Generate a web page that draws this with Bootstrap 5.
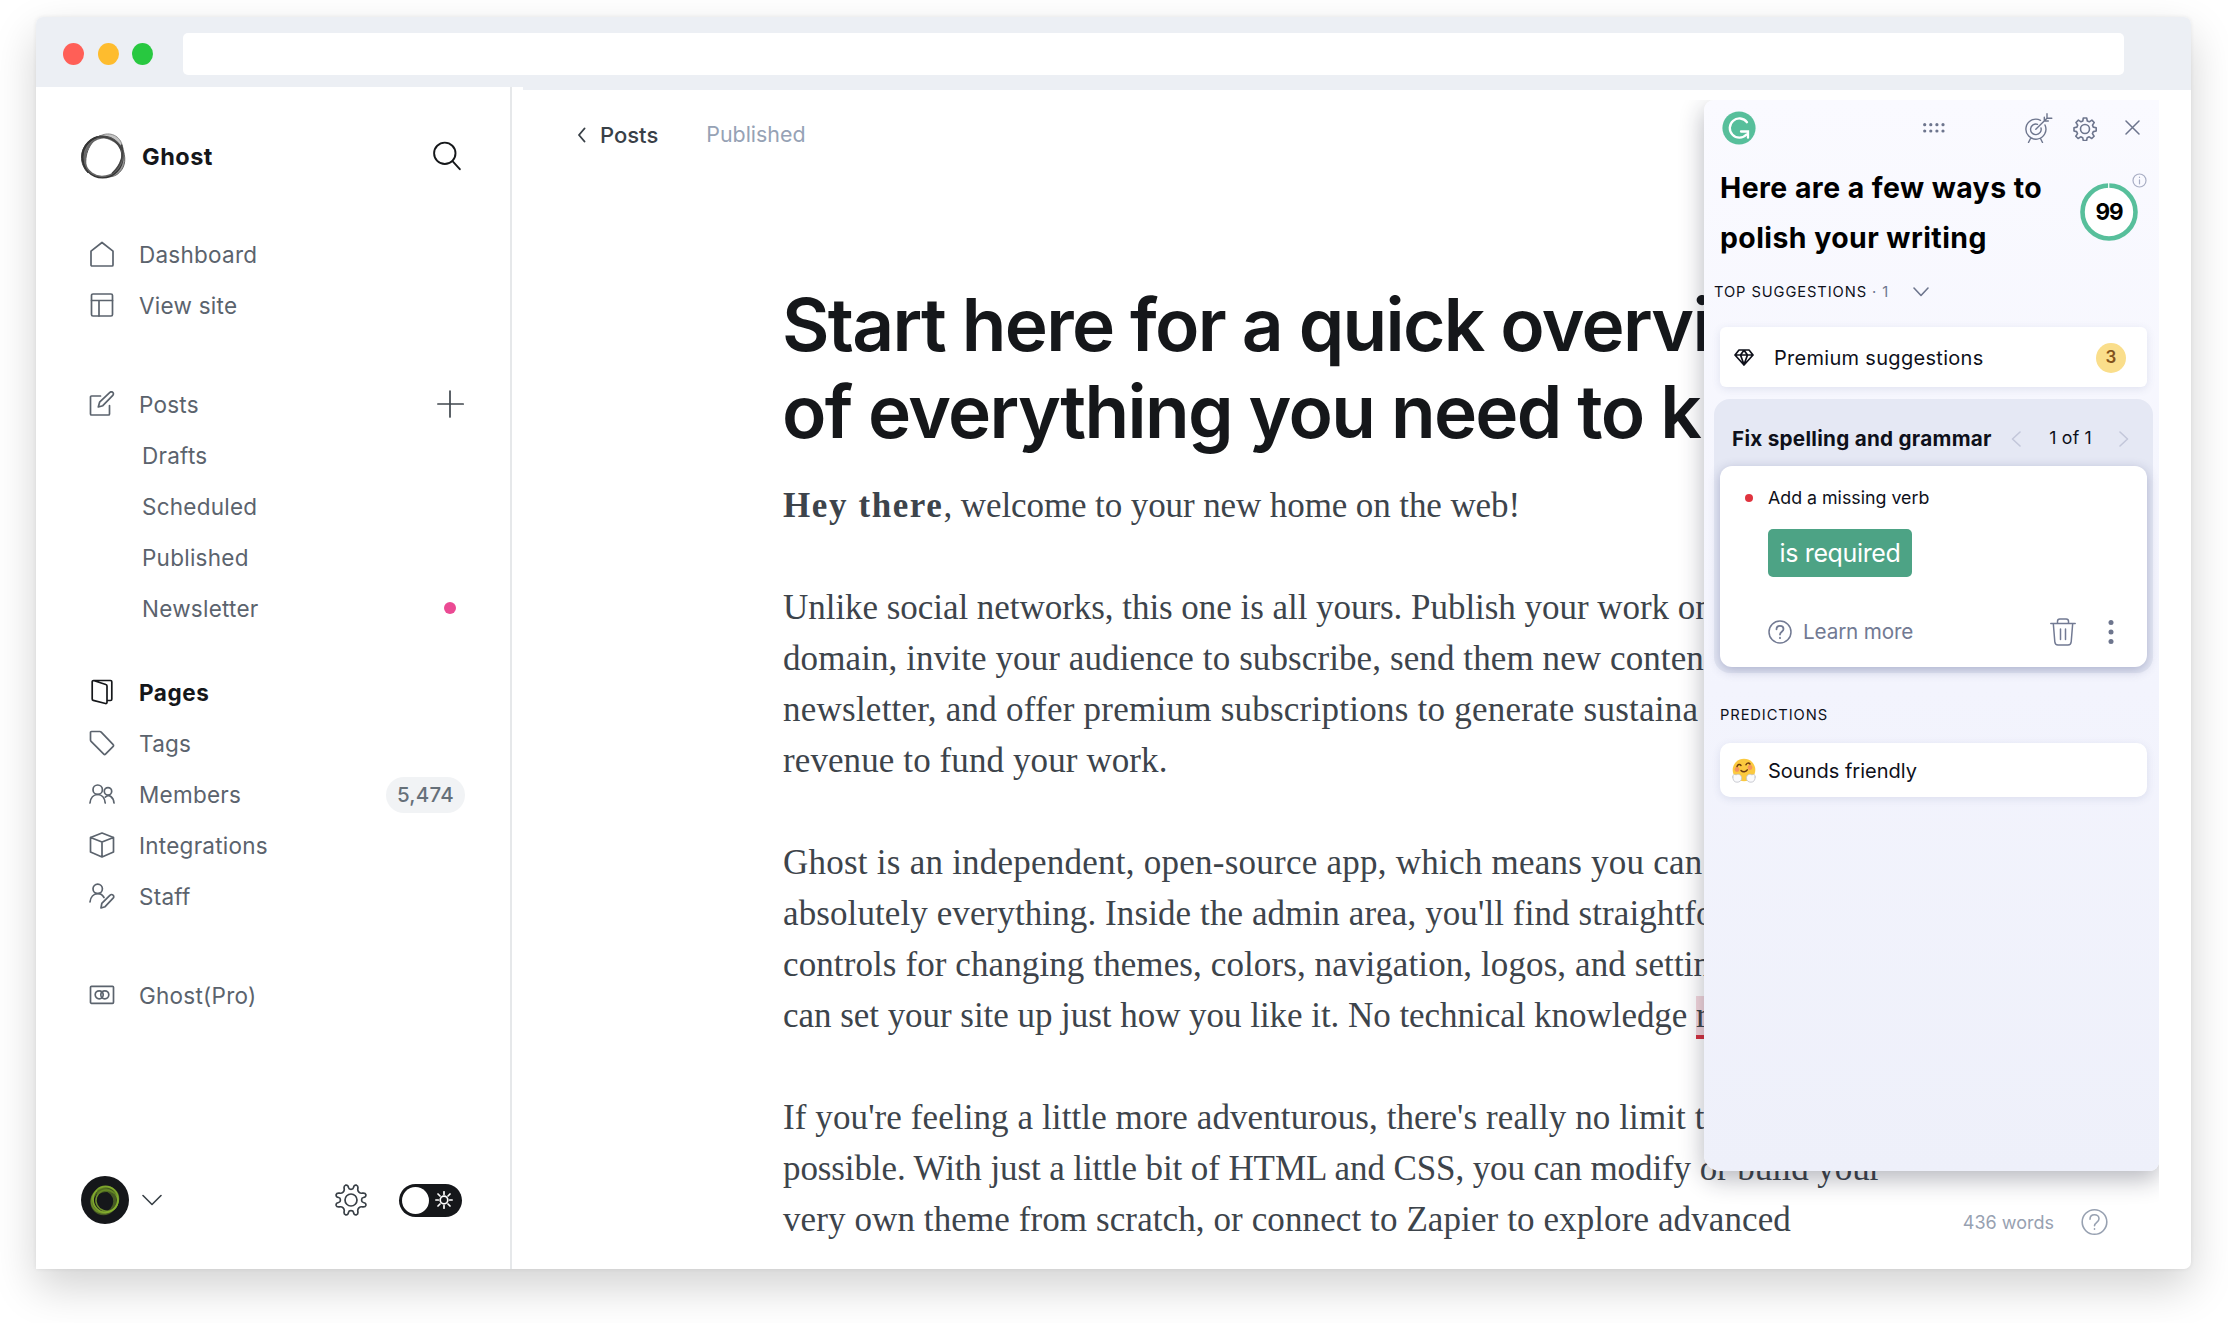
<!DOCTYPE html>
<html lang="en">
<head>
  <meta charset="UTF-8">
  <meta name="viewport" content="width=device-width, initial-scale=1">
  <title>Ghost</title>
  <link href="https://cdn.jsdelivr.net/npm/bootstrap@5.3.3/dist/css/bootstrap.min.css" rel="stylesheet">

  <style>
    body {
      font-family: Inter, "Liberation Sans", sans-serif;
      color: #15171a;
      background: #fff;
      padding: 17px 0 0 36px;
    }
    svg { display: block; flex: none; stroke-linecap: round; stroke-linejoin: round; }
    svg:not([fill]) { fill: none; }
    svg:not([stroke]) { stroke: currentColor; }
    a { color: inherit; text-decoration: none; }
    .window {
      width: 2155px;
      height: 1252px;
      background: #fff;
      border-radius: 7px 7px 7px 0;
      box-shadow: 0 18px 44px rgba(0, 0, 0, .18), 0 0 4px rgba(0, 0, 0, .07);
    }

    /* Browser bar */
    .browser-bar {
      height: 70px;
      padding: 3px 67px 0 27px;
      background: #eceff4;
      border-radius: 7px 7px 0 0;
    }
    .light { width: 21px; height: 22px; border-radius: 50%; margin-right: 13.5px; }
    .light-red { background: #ff5f57; }
    .light-yellow { background: #febc2e; }
    .light-green { background: #28c840; }
    .address { height: 42px; margin: 1px 0 0 16px; background: #fff; border-radius: 5px; }

    /* Sidebar */
    .sidebar { width: 476px; height: 1182px; border-right: 2px solid #e6e8ea; padding: 45px 45px 0 44px; }
    .site-row { height: 48px; margin-bottom: 49px; }
    .site-name { font-size: 23.5px; font-weight: 700; margin-left: 16px; padding-top: 1px; letter-spacing: .5px; }
    .side-list { margin-bottom: 48px; }
    .side-list.short-gap { margin-bottom: 33px; }
    .side-list a {
      display: flex;
      align-items: center;
      height: 51px;
      padding-left: 9px;
      font-size: 22.5px;
      color: #5b636d;
      letter-spacing: .25px;
    }
    .side-list a svg { margin-right: 24px; margin-top: -1px; }
    .side-list svg:not([stroke-width]) { stroke-width: 1.7; }
    .side-list a.sub { padding-left: 62px; }
    .side-list a.current { color: #15171a; font-weight: 700; letter-spacing: .55px; }
    .side-list .end { margin-left: auto; margin-right: 0; }
    .side-list .news-dot { width: 12px; height: 12px; border-radius: 50%; background: #eb4a93; margin: -2px 9px 0 auto; }
    .count { height: 36px; line-height: 36px; padding: 0 11px; border-radius: 18px; background: #f1f3f5; color: #667079; font-size: 20.5px; font-weight: 500; }
    .side-foot { margin-top: 154px; height: 50px; }
    .avatar { width: 48px; height: 48px; margin: 0 13px 0 1px; }
    .toggle { width: 63px; height: 33px; border-radius: 17px; background: #15171a; color: #fff; padding: 3px 9px 3px 3px; margin: 0 3px 0 32px; }
    .toggle i { width: 27px; height: 27px; border-radius: 50%; background: #fff; }

    /* Editor */
    .editor { margin-left: 11px; border-top: 3px solid #eceff4; height: 1182px; overflow: hidden; }
    .editor-top { padding: 28px 0 0 51px; height: 62px; font-size: 22px; }
    .editor-top .back { color: #394047; font-weight: 500; }
    .editor-top .back svg { margin-right: 13px; }
    .editor-top .state { color: #96a2b5; font-size: 21.4px; margin-left: 48px; margin-top: -2px; }
    .post { margin: 129px 0 0 260px; width: 921px; white-space: nowrap; }
    .post h1 { font-size: 73px; line-height: 87px; font-weight: 600; letter-spacing: -1.7px; margin: 0 0 24.5px -1px; }
    .post p { font-family: "Liberation Serif", serif; font-size: 35px; line-height: 51px; letter-spacing: .1px; color: #3d444b; margin-bottom: 51px; }
    .post strong { letter-spacing: 1.6px; }
    .post .tighter { letter-spacing: -.1px; }
    .post .tight { letter-spacing: -.04px; }
    .post .loose { letter-spacing: .24px; }
    .grammar { background: #f3d7dd; border-bottom: 4px solid #d3303f; }
    .words { right: 83px; bottom: 33px; font-size: 18px; color: #97a1b1; }
    .words svg { margin-left: 27px; }

    /* Writing assistant */
    .assistant {
      left: 1668px;
      top: 83px;
      width: 455px;
      height: 1071px;
      padding: 0 12px 0 16px;
      border-radius: 10px 0 9px 16px;
      background: linear-gradient(#fafaff, #f3f4fd 55%, #eef0fa);
      box-shadow: 0 8px 24px rgba(25, 28, 50, .32);
      clip-path: inset(0 0 -50px -40px);
      color: #0e101a;
    }
    .assistant-bar { height: 54px; padding: 1px 7px 0 2px; color: #6d758d; }
    .assistant h2 { font-size: 28.4px; line-height: 49.5px; font-weight: 700; letter-spacing: .45px; margin: 9px 0 0; color: #000; }
    .score { width: 58px; height: 58px; margin: 28.5px 9px 0 0; font-size: 22.5px; letter-spacing: -1px; font-weight: 700; color: #000; }
    .score svg { position: absolute; inset: 0; }
    .score .info { inset: -9.5px -9px auto auto; }
    .label-row { font-size: 14.7px; letter-spacing: .9px; line-height: 20px; }
    .label-row.top { margin: 20px 0 25px -6px; }
    .label-row.top svg { margin-left: 24px; }
    .label-row.top span { color: #6d758d; }
    .tile { background: #fff; box-shadow: 0 2px 9px rgba(60, 70, 130, .12); font-size: 20px; }
    .premium { height: 60px; border-radius: 6px; padding: 1px 21px 0 14px; letter-spacing: .3px; gap: 20px; }
    .gold { width: 30px; height: 30px; border-radius: 50%; background: #fade8b; color: #83521b; font-size: 17px; font-weight: 600; }
    .fix { margin: 12px -6px 0; height: 274px; border-radius: 16px; background: #e5e8f4; padding: 0 6px; }
    .fix-head { height: 67px; padding: 12px 18px 0 12px; }
    .fix-head b { font-size: 20.7px; letter-spacing: .26px; }
    .fix-head span { font-size: 17.7px; margin: 0 27px 0 28px; letter-spacing: .2px; }
    .fix-card { height: 201px; border-radius: 12px; background: #fff; box-shadow: 0 3px 12px rgba(50, 58, 120, .32); padding: 20px 33px 0 48px; }
    .verb { font-size: 17.8px; line-height: 24px; }
    .red-dot { left: -23px; top: 8px; width: 8px; height: 8px; border-radius: 50%; background: #e0343f; }
    .apply { height: 48px; line-height: 49px; margin-top: 19px; padding: 0 11.5px; border-radius: 5px; background: #4da385; color: #fff; font-size: 25px; letter-spacing: -.35px; }
    .fix-foot { margin-top: 38px; height: 34px; color: #727a93; font-size: 20.7px; letter-spacing: -.15px; gap: 11px; }
    .fix-foot .kebab { margin-left: 21px; }
    .sounds { height: 54px; margin-top: 18px; border-radius: 10px; padding: 1px 0 0 12px; gap: 12px; }
  </style>
</head>
<body class="min-vh-100">

<div class="window position-relative">
  <div class="browser-bar d-flex align-items-center">
    <span class="light light-red"></span>
    <span class="light light-yellow"></span>
    <span class="light light-green"></span>
    <div class="address flex-grow-1"></div>
  </div>

  <div class="d-flex">
    <!-- Sidebar -->
    <nav class="sidebar flex-shrink-0">
      <div class="site-row d-flex align-items-center">
        <svg width="46" height="48" viewBox="0 0 46 48" stroke="#444">
          <path d="M19 4.500c9-5.500 20-2 23 8 1.500 5 1.500 8 1.500 8C40 12 31 6.500 19 4.500z" fill="#c4c4c4" stroke="#888" stroke-width="1"/>
          <path d="M43.500 19c3 10 1 18-6.500 23.500-3 2-7 2.500-10 2.500 9-4 15-14 16.500-26z" fill="#999" stroke="#666" stroke-width="1"/>
          <path d="M20 4C9 6 2 15 1.500 24c-.3 7 2.500 13 6.500 17C3 30 6 12 20 4z" fill="#777" stroke="#555" stroke-width="1"/>
          <ellipse cx="22.500" cy="25" rx="20" ry="20.500" stroke-width="2.200" stroke="#333"/>
          <ellipse cx="24" cy="24.500" rx="18.500" ry="20" stroke-width="1.600" stroke="#666" transform="rotate(35 23 24)"/>
          <path d="M17 5c12-1 21 4 25 13M41.500 13c3 8 0 20-9 28" stroke="#444" stroke-width="1.600"/>
        </svg>
        <span class="site-name">Ghost</span>
        <svg class="ms-auto me-1" width="28" height="30" viewBox="0 0 28 30" stroke-width="1.900"><circle cx="11.800" cy="12.300" r="10.700"/><path d="M19.500 20.200l7.300 8"/></svg>
      </div>

      <div class="side-list">
        <a href="#"><svg width="26" height="26" viewBox="0 0 26 26"><path d="M2 10.200L13 1.500l11 8.700V24a1 1 0 0 1-1 1H3a1 1 0 0 1-1-1z"/></svg>Dashboard</a>
        <a href="#"><svg width="26" height="26" viewBox="0 0 26 26"><rect x="2.500" y="2" width="21" height="22" rx="1.500"/><path d="M2.500 8.500h21M10 8.500V24"/></svg>View site</a>
      </div>

      <div class="side-list short-gap">
        <a href="#"><svg width="26" height="26" viewBox="0 0 26 26"><path d="M11.500 5H2.500a1 1 0 0 0-1 1v17a1 1 0 0 0 1 1h17a1 1 0 0 0 1-1V14.500M9.300 16l1.300-4.800L20.900 1.400a2 2 0 0 1 2.900 0 2 2 0 0 1 0 2.900L13.800 14.700z"/></svg>Posts
          <svg class="end" width="28" height="28" viewBox="0 0 28 28" stroke="#40474e" stroke-width="1.700"><path d="M13 1v26M0.800 14h25.400"/></svg></a>
        <a href="#" class="sub">Drafts</a>
        <a href="#" class="sub">Scheduled</a>
        <a href="#" class="sub">Published</a>
        <a href="#" class="sub">Newsletter<span class="news-dot"></span></a>
      </div>

      <div class="side-list">
        <a href="#" class="current"><svg width="26" height="26" viewBox="0 0 26 26" stroke-width="1.700"><path d="M4.500 1.500h17a1.300 1.300 0 0 1 1.300 1.300v17.400a1.300 1.300 0 0 1-1.300 1.300H18M4.500 1.500a1.300 1.300 0 0 0-1.300 1.300V20a1.300 1.300 0 0 0 1 1.300l12.300 3.200a1.200 1.200 0 0 0 1.500-1.200V7a1.600 1.600 0 0 0-1.200-1.500z"/></svg>Pages</a>
        <a href="#"><svg width="26" height="26" viewBox="0 0 26 26"><path d="M1.500 2.500a1 1 0 0 1 1-1h8.300a2 2 0 0 1 1.400.6l12 12.500a1.200 1.200 0 0 1 0 1.700l-7.700 7.900a1.200 1.200 0 0 1-1.700 0L2.100 11.300a2 2 0 0 1-.6-1.400z"/></svg>Tags</a>
        <a href="#"><svg width="26" height="26" viewBox="0 0 26 26"><circle cx="8.700" cy="8.700" r="4.700"/><circle cx="19" cy="10.300" r="3.700"/><path d="M1 22c.5-5 3.600-8.500 7.700-8.500s7 3.400 7.500 8.500M16.300 16.200c3.800-3.500 8-.4 8.700 5.800"/></svg>Members<span class="count end">5,474</span></a>
        <a href="#"><svg width="26" height="26" viewBox="0 0 26 26"><path d="M1.500 5.500L13 1l11.500 4.500v14.500L13 25 1.500 20zM1.500 5.500L13 10l11.500-4.500M13 10v15"/></svg>Integrations</a>
        <a href="#"><svg width="26" height="26" viewBox="0 0 26 26"><circle cx="8.700" cy="5.800" r="4.700"/><path d="M1 19c.5-5 3.600-8.300 7.700-8.300 2.700 0 5 1.400 6.300 3.800M12 25l.8-4.600 8.300-8.200a2 2 0 0 1 3 0 2 2 0 0 1 0 3l-8 8.500z"/></svg>Staff</a>
      </div>

      <div class="side-list mb-0">
        <a href="#"><svg width="26" height="26" viewBox="0 0 26 26"><rect x="1.500" y="4.300" width="23" height="17" rx="1"/><circle cx="10.200" cy="12.800" r="4"/><circle cx="15.800" cy="12.800" r="4"/></svg>Ghost(Pro)</a>
      </div>

      <div class="side-foot d-flex align-items-center">
        <svg class="avatar" viewBox="0 0 48 48" stroke="none">
          <circle cx="24" cy="24" r="24" fill="#15171a"/>
          <g stroke="#86b02f">
            <ellipse cx="24.500" cy="23.500" rx="12.500" ry="13" stroke-width="1.800" opacity=".9"/>
            <ellipse cx="22.500" cy="25.500" rx="11.500" ry="12" stroke-width="3.500" opacity=".45"/>
            <ellipse cx="24" cy="24" rx="14" ry="12.500" stroke-width="1.500" opacity=".6" transform="rotate(-35 24 24)"/>
            <ellipse cx="26" cy="24" rx="11" ry="10.500" stroke-width="1.500" opacity=".8" transform="rotate(20 24 24)"/>
            <path d="M16 14c7-5 17-3 20 6-5-5-13-5-20-1z" fill="#587a20" stroke="none" opacity=".6"/>
          </g>
        </svg>
        <svg width="20" height="12" viewBox="0 0 20 12" stroke="#394047" stroke-width="1.600"><path d="M1 1.500l9 9 9-9"/></svg>
        <svg class="ms-auto" width="32" height="32" viewBox="0 0 32 32" stroke="#394047" stroke-width="1.700"><circle cx="16" cy="16" r="6"/><path d="M10.500 1.200c1.900-.4 2.700.7 3 2.500.4 2.300 4.600 2.300 5 0 .3-1.800 1.100-2.900 3-2.500 1.700.6 1.700 1.800 1.300 3.700-.4 2.400 1.800 4.600 4.300 4.300 1.900-.4 3.200-.4 3.700 1.300.4 1.900-.7 2.700-2.500 3-2.300.4-2.300 4.600 0 5 1.800.3 2.900 1.100 2.500 3-.5 1.700-1.800 1.700-3.700 1.300-2.500-.3-4.700 1.900-4.300 4.300.4 1.900.4 3.100-1.300 3.700-1.900.4-2.700-.7-3-2.500-.4-2.300-4.600-2.300-5 0-.3 1.800-1.100 2.900-3 2.500-1.700-.6-1.700-1.800-1.300-3.700.4-2.400-1.800-4.600-4.300-4.300-1.900.4-3.200.4-3.700-1.300-.4-1.900.7-2.700 2.500-3 2.300-.4 2.300-4.600 0-5-1.800-.3-2.900-1.100-2.500-3 .5-1.700 1.800-1.700 3.700-1.300 2.500.3 4.700-1.900 4.300-4.300-.4-1.900-.4-3.100 1.300-3.700z"/></svg>
        <div class="toggle d-flex align-items-center justify-content-between">
          <i></i>
          <svg width="18" height="18" viewBox="0 0 18 18" stroke-width="1.700"><circle cx="9" cy="9" r="3.800"/><path d="M9 .8v2.500M9 14.700v2.500M.8 9h2.500M14.700 9h2.500M3 3l2 2M13 13l2 2M3 15l2-2M13 5l2-2"/></svg>
        </div>
      </div>
    </nav>

    <!-- Editor -->
    <main class="editor flex-grow-1">
      <div class="editor-top d-flex align-items-center">
        <a href="#" class="back d-flex align-items-center"><svg width="9" height="16" viewBox="0 0 9 16" stroke-width="1.900" class="ms-1"><path d="M6.500 1.500L1 8l5.500 6.500"/></svg>Posts</a>
        <span class="state">Published</span>
      </div>
      <article class="post">
        <h1>Start here for a quick overview<br>of everything you need to know</h1>
        <p class="tighter"><strong>Hey there</strong>, welcome to your new home on the web!</p>
        <p><span class="tight">Unlike social networks, this one is all yours. Publish your work on</span><br>
          domain, invite your audience to subscribe, send them new content<br>
          <span class="loose">newsletter, and offer premium subscriptions to generate sustaina</span><br>
          revenue to fund your work.</p>
        <p><span class="loose">Ghost is an independent, open-source app, which means you can</span><br>
          absolutely everything. Inside the admin area, you'll find straightfo<br>
          controls for changing themes, colors, navigation, logos, and settin<br>
          <span class="tight">can set your site up just how you like it. No technical knowledge <span class="grammar">re</span></span></p>
        <p>If you're feeling a little more adventurous, there's really no limit to<br>
          <span class="tighter">possible. With just a little bit of HTML and CSS, you can modify or build your</span><br>
          very own theme from scratch, or connect to Zapier to explore advanced</p>
      </article>
    </main>
  </div>

  <div class="words position-absolute d-flex align-items-center">
    436 words
    <svg width="27" height="28" viewBox="0 0 27 28" stroke-width="1.600"><circle cx="13.500" cy="14" r="12.300"/><path d="M9 11.200c0-2.700 1.900-4.400 4.500-4.400s4.500 1.700 4.500 4c0 3.500-4.500 3.500-4.500 7M13.500 20.800v.4"/></svg>
  </div>

  <!-- Writing assistant -->
  <aside class="assistant position-absolute">
    <div class="assistant-bar d-flex align-items-center">
      <svg width="34" height="34" viewBox="0 0 34 34" stroke="#fff" stroke-width="2.300"><circle cx="17" cy="17" r="16.600" fill="#57bf9b" stroke="none"/><path d="M25 11.200A9.600 9.600 0 1 0 24.500 23.500"/><path d="M19 20.500h7v6.200" stroke-linejoin="miter"/></svg>
      <svg width="22" height="10" viewBox="0 0 22 10" fill="#6d758d" stroke="none" style="margin-left:167px"><circle cx="1.700" cy="1.700" r="1.600"/><circle cx="7.800" cy="1.700" r="1.600"/><circle cx="13.900" cy="1.700" r="1.600"/><circle cx="20" cy="1.700" r="1.600"/><circle cx="1.700" cy="8" r="1.600"/><circle cx="7.800" cy="8" r="1.600"/><circle cx="13.900" cy="8" r="1.600"/><circle cx="20" cy="8" r="1.600"/></svg>
      <svg class="ms-auto" width="28" height="30" viewBox="0 0 28 30" stroke-width="1.400"><path d="M15.500 7.300A10 10 0 1 0 20 12M12.500 11.300A5.300 5.300 0 1 0 16 15M10.800 16.300L22 5.300M22 5.300V.8M22 5.300h4.800M19.300 8V4.200M19.300 8h4M5.500 25.500l-2 4M15.500 25.500l2 4"/></svg>
      <svg width="24" height="24" viewBox="0 0 24 24" stroke-width="1.600" style="margin-left:20px;margin-top:2px"><circle cx="12" cy="12" r="4.500"/><path d="M10.300 1h3.400l.6 3 2 .8 2.600-1.700 2.300 2.400-1.700 2.600.8 2 2.900.6v3.300l-2.900.6-.9 2 1.700 2.600-2.300 2.300-2.600-1.700-2 .9-.6 2.900h-3.300l-.6-2.900-2-.9-2.600 1.700-2.300-2.300 1.700-2.600-.9-2L1 14v-3.300l2.900-.6.8-2L3 5.500l2.400-2.400 2.600 1.700 1.800-.8z"/></svg>
      <svg width="15" height="15" viewBox="0 0 15 15" stroke-width="1.500" style="margin-left:28px"><path d="M1 1l13 13M14 1L1 14"/></svg>
    </div>

    <div class="d-flex justify-content-between">
      <h2>Here are a few ways to<br>polish your writing</h2>
      <div class="score position-relative d-flex align-items-center justify-content-center">
        <svg width="58" height="58" viewBox="0 0 58 58"><circle cx="29" cy="29" r="26.500" fill="#fff" stroke="#57bf9b" stroke-width="4.600"/><path d="M28.700 0v5.500" stroke="#fff" stroke-width="1.200" stroke-linecap="butt"/></svg>
        <svg class="info" width="15" height="15" viewBox="0 0 15 15" stroke="#a9aec4" stroke-width="1.200"><circle cx="7.500" cy="7.500" r="6.500"/><path d="M7.500 6.800v4M7.500 4.200v.3"/></svg>
        <span class="position-relative">99</span>
      </div>
    </div>

    <div class="label-row top d-flex align-items-center">
      TOP SUGGESTIONS<span>&nbsp;· 1</span>
      <svg width="16" height="10" viewBox="0 0 16 10" stroke="#6d758d" stroke-width="1.600"><path d="M1 1l7 7.500L15 1"/></svg>
    </div>

    <div class="tile premium d-flex align-items-center">
      <svg width="20" height="17" viewBox="0 0 20 17" stroke="#0e101a" stroke-width="1.700"><path d="M5 1h10l4 5-9 10L1 6zM1 6h18M6.500 6L10 15.500 13.500 6 10 1.200z"/></svg>
      Premium suggestions
      <span class="gold ms-auto d-flex align-items-center justify-content-center">3</span>
    </div>

    <section class="fix">
      <div class="fix-head d-flex align-items-center">
        <b>Fix spelling and grammar</b>
        <svg class="ms-auto" width="10" height="16" viewBox="0 0 10 16" stroke="#c3c7da" stroke-width="1.600"><path d="M9 1L1.500 8 9 15"/></svg>
        <span>1 of 1</span>
        <svg width="10" height="16" viewBox="0 0 10 16" stroke="#c3c7da" stroke-width="1.600"><path d="M1 1l7.500 7L1 15"/></svg>
      </div>
      <div class="fix-card">
        <div class="verb position-relative"><span class="red-dot position-absolute"></span>Add a missing verb</div>
        <span class="apply d-inline-block">is required</span>
        <div class="fix-foot d-flex align-items-center">
          <svg width="24" height="24" viewBox="0 0 24 24" stroke-width="1.500"><circle cx="12" cy="12" r="11"/><path d="M8.500 9.300c0-2.100 1.500-3.500 3.500-3.500s3.500 1.300 3.500 3.100c0 2.800-3.500 2.800-3.500 5.600M12 17.700v.5" stroke-width="1.800"/></svg>
          Learn more
          <svg class="ms-auto" width="26" height="28" viewBox="0 0 26 28" stroke-width="1.500"><path d="M.8 5.500h24.400M7.500 5.500V3.300C7.500 2 8.500 1 9.800 1h6.400c1.300 0 2.300 1 2.300 2.300v2.200M3.300 5.500l1.500 18.300c.2 2 1.400 3.200 3.200 3.200h10c1.800 0 3-1.200 3.200-3.200l1.500-18.300M10.500 11v10.500M15.500 11v10.500"/></svg>
          <svg class="kebab" width="6" height="26" viewBox="0 0 6 26" fill="#6d758d" stroke="none"><circle cx="3" cy="3.500" r="2.500"/><circle cx="3" cy="13" r="2.500"/><circle cx="3" cy="22.500" r="2.500"/></svg>
        </div>
      </div>
    </section>

    <div class="label-row mt-4 pt-2">PREDICTIONS</div>
    <div class="tile sounds d-flex align-items-center">
      <svg width="24" height="25" viewBox="0 0 24 25">
        <circle cx="12" cy="12" r="11.300" fill="#fbc93f" stroke="none"/>
        <circle cx="5" cy="11.500" r="2.400" fill="#f5945c" stroke="none"/><circle cx="18" cy="9.500" r="2.400" fill="#f5945c" stroke="none"/>
        <path d="M5 8.500c.8-2.200 2.800-2.600 4-1M14 6.800c.8-2 2.800-2.200 4-.8M9 12.500c1.800 2 4.800 1.700 6.300-.6" stroke="#6b3a12" stroke-width="1.500"/>
        <path d="M.8 19c0-3 2-3 3.200-2 2-1.500 5-.5 5.500 2.500.4 3-1.700 4.800-4.500 4.700-2.800 0-4.200-2-4.200-5.200zM23.200 19c0-3-2-3-3.200-2-2-1.500-5-.5-5.500 2.500-.4 3 1.700 4.800 4.500 4.700 2.800 0 4.200-2 4.200-5.200z" fill="#fafafc" stroke="#bfc1c9" stroke-width=".8"/>
      </svg>
      Sounds friendly
    </div>
  </aside>
</div>

<script src="https://cdn.jsdelivr.net/npm/bootstrap@5.3.3/dist/js/bootstrap.bundle.min.js"></script>
</body>
</html>
